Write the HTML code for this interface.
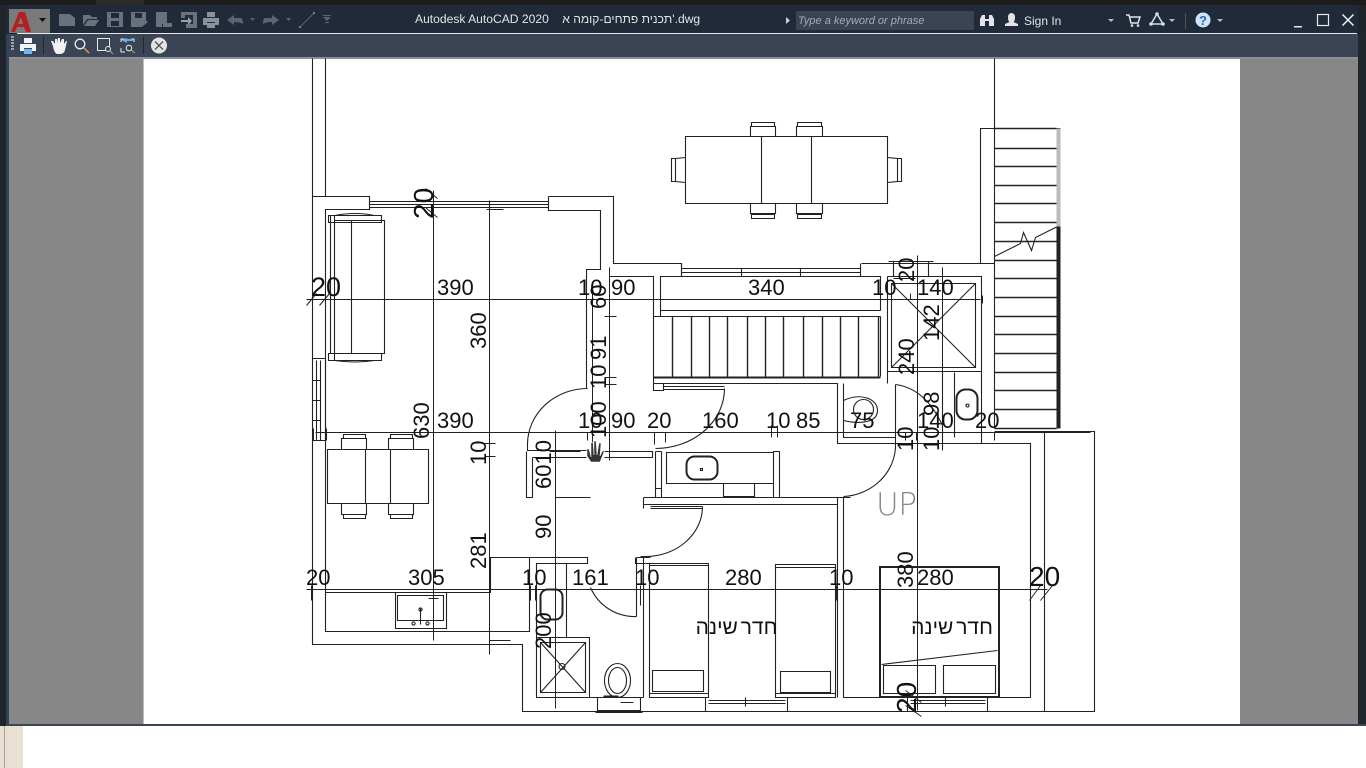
<!DOCTYPE html>
<html><head><meta charset="utf-8"><title>AutoCAD</title>
<style>
html,body{margin:0;padding:0;width:1366px;height:768px;overflow:hidden;background:#fff}
svg{display:block;position:absolute;left:0;top:0}
.d{font:22px "Liberation Sans",sans-serif;fill:#111}
.ui{font-family:"Liberation Sans","Noto Sans CJK JP",sans-serif}
</style></head><body>
<svg width="1366" height="768" viewBox="0 0 1366 768" xmlns="http://www.w3.org/2000/svg">
<rect width="1366" height="768" fill="#fff"/>
<rect x="0" y="0" width="1366" height="726" fill="#20242b"/>
<rect x="0" y="0" width="1366" height="5" fill="#1c1c1c"/>
<rect x="96" y="0" width="48" height="5" fill="#2b2b2b"/>
<rect x="6" y="5" width="1352" height="28" fill="#212a38"/>
<rect x="17" y="33" width="1340" height="1" fill="#e8e8e8"/>
<rect x="6" y="34" width="1352" height="23" fill="#3b4454"/>
<rect x="6" y="57" width="1352" height="2" fill="#8a8f98"/>
<rect x="6" y="34" width="3" height="692" fill="#33415a"/>
<rect x="9" y="59" width="135" height="665" fill="#878787"/>
<rect x="1240" y="59" width="118" height="665" fill="#878787"/>
<rect x="143" y="59" width="1" height="665" fill="#bbb"/>
<rect x="144" y="59" width="1096" height="665" fill="#fff"/>
<rect x="1358" y="34" width="8" height="692" fill="#22262d"/>
<rect x="6" y="724" width="1360" height="2" fill="#3b4454"/>
<rect x="0" y="726" width="23" height="42" fill="#e8e0d3"/>
<rect x="4" y="726" width="1" height="42" fill="#aaa498"/>

<!-- Drawing -->
<g transform="translate(.5,.5)" fill="none" stroke="#222" stroke-width="1.1">
<!-- outer walls -->
<path d="M312 58V644H522V711H1094V431H994M325 58V196M312 196H369V209H325V631H529V557H490V592H325M369 201H548M369 204H548M369 207H548M369 201V209M548 201V209M489 200V209M548 196V210H600V269H586V388M548 196H613V263H681V276H660V316M609 276H653V316"/>
<!-- upper window -->
<path d="M681 263V276M681 268H860M681 272H860M681 276H860M741 268V276M800 268V276M860 263V276M861 263H980V128H1060M994 58V428M980 263H994M860 276H880V310"/>
<!-- stair mid -->
<path d="M660 310H880M653 316H880M653 316V376M880 316V376M887 276V383M653 383H837V443H855M843 383V437H895M653 376V383"/>
<path d="M672 316V377M691 316V377M709 316V377M727 316V377M747 316V377M765 316V377M783 316V377M803 316V377M822 316V377M840 316V377M858 316V377M878 316V377" stroke-width="1.4"/>
<path d="M653 377H880" stroke-width="2"/>
<!-- right stair treads -->
<path d="M994 128H1056M994 148H1056M994 166H1056M994 185H1056M994 203H1056M994 222H1056M994 241H1056M994 260H1056M994 278H1056M994 297H1056M994 316H1056M994 334H1056M994 353H1056M994 372H1056M994 390H1056M994 409H1056M994 428H1056" stroke-width="1.5"/>
<path d="M994 256L1020 243L1023 232L1031 250L1035 237L1057 226"/>
<!-- shower top right -->
<path d="M887 276H981V443M891 283H975V367H891ZM891 283L975 367M975 283L891 367M887 371H981M888 261H933M893 261V276M928 261V276M954 372V437M942 372V447"/>
<path d="M895 384V447M895 384Q925 388 942 425" />
<rect x="956" y="389" width="21" height="30" rx="9" stroke-width="2"/>
<circle cx="967" cy="405" r="1.5"/>
<path d="M843 400C860 392 877 398 877 410C877 422 860 424 843 420"/>
<circle cx="863" cy="409" r="10"/>
<!-- lower right -->
<path d="M845 437H895M842 443H1030V697H843V497H837V504M843 497H850M1044 431V711M895 447A55 52 0 0 1 843 496"/>
<!-- centre left door -->
<path d="M527 443A60 56 0 0 1 587 388M527 443V450H586M527 450H555M532 457H586M526 451V497H532V457M604 451H652V457H604M555 451V457"/>
<path d="M724 388A69 60 0 0 1 655 448M663 386H724M663 389H724M653 383V390H663V383"/>
<!-- bathroom upper -->
<path d="M655 451V497M661 451V497M655 451H661M655 488H661M666 452H773V483H666ZM723 483V496H754V483M773 451V497H779V451ZM643 497H778M779 497H837M643 497V508M643 504H837M837 504V697M650 506H702M650 508H702M702 506A57 50 0 0 1 645 556M640 556H650"/>
<rect x="686" y="456" width="31" height="23" rx="8" stroke-width="2"/>
<rect x="700" y="468" width="2" height="2"/>
<!-- beds -->
<path d="M649 563H708V697H649ZM649 565H708M652 670H703V691H652ZM775 564H835V697H775ZM775 567H835M780 671H830V692H780ZM649 693H708M775 693H835"/>
<rect x="879.500" y="566.500" width="119" height="130" stroke-width="2"/>
<path d="M881 664L997 650M883 665H935V693H883ZM943 665H995V693H943Z"/>
<!-- bedroom windows -->
<path d="M705 697V711H787V697M702 711H788M708 700H785M708 703H785M745 697V706M903 711H990M907 697V711M987 697V711M910 700H985M910 703H985M945 697V706"/>
<!-- wc -->
<path d="M529 557H587V563H536V697H643M566 563V637M536 637H589V697M540 642H585V692H540ZM540 642L585 692M585 642L540 692M636 557V616M643 557V697M636 557H650M590 587A48 48 0 0 0 636 616M635 557V563H650"/>
<rect x="540" y="589" width="22" height="30" rx="7" stroke-width="2"/>
<rect x="558.500" y="663" width="6" height="6" rx="3"/>
<ellipse cx="617" cy="680" rx="13" ry="17"/>
<ellipse cx="617" cy="680" rx="9" ry="13"/>
<path d="M597 697V710H640V697M595 712H642M620 702H633"/>
<path d="M603 696H618" stroke-width="2"/>
<!-- kitchen sink -->
<path d="M395 592H446V628H395ZM397 595H443V620H397ZM420 608V624"/>
<circle cx="420" cy="609" r="1.6"/><circle cx="413" cy="623" r="1.6"/><circle cx="427" cy="623" r="1.6"/>
<!-- living sofa -->
<path d="M334 220H384V353H334M330 215V353M334 215V360M351 220V353M328 215H381V222H328ZM328 353H381V360H328ZM334 215Q355 211 374 215M334 360Q355 363 374 360"/>
<!-- side window -->
<path d="M312 358H325V440M316 360V440M320 360V440M312 380H320M312 400H320M312 420H320M312 440H325"/>
<!-- dining -->
<path d="M327 449H428V503H327ZM365 449V503M390 449V503" stroke-width="1.1"/>
<path d="M341 449V438H366V449M343 434H365V438H343ZM388 449V438H413V449M390 434H412V438H390ZM341 503V514H366V503M343 514H365V518H343ZM388 503V514H413V503M390 514H412V518H390Z"/>
<!-- big table -->
<path d="M685 136H887V203H685ZM761 136V203M811 136V203" stroke-width="1.1"/>
<path d="M750 136V126H775V136M751 122H774V126H751ZM796 136V126H822V136M797 122H821V126H797ZM750 203V213H775V203M751 214H774V218H751ZM796 203V213H822V203M797 214H821V218H797ZM685 157L675 158V181L685 182M671 158H675V181H671ZM887 157L897 158V181L887 182M897 158H901V181H897Z"/>
<!-- dimension lines -->
<g stroke="#222" stroke-width="1">
<path d="M433 190V640M489 205V654M555 430V708M306 299H980M315 432H1090M306 589H1047M592 290V440M609 267V460M917 255V710M942 267V450"/>
<path d="M555 432H605M609 457H645M555 497H590M555 451H580M489 640H510"/>
<!-- ticks -->
<path d="M306 305L316 293M319 305L329 293M312 299V310M325 299V310M425 188L437 198M425 207L437 217M486 209H503M586 299V310M592 296V304M604 316H616M604 377H616M604 384H616M313 428V440M326 428V440M587 432V440M592 432V450M654 432V444M665 432V442M771 425V437M777 425V437M837 430V438M880 283V299M910 293V299M982 295V303M905 432V440M916 432V440M942 432V440M981 432V440M994 432V440M311 585V600M325 585V600M530 585V600M535 585V600M640 585V600M649 585V600M836 585V600M843 585V600M1029 600L1040 585M1040 600L1052 585M1030 589V602M1044 589V602M484 443H495M484 456H495M549 697H561M549 451H561M428 598H438M640 597V605M905 690L921 702M905 705L921 716M893 278H915"/>
</g>
<path d="M1056 128V226" stroke="#bbb" stroke-width="4" transform="translate(2,0)"/>
<path d="M1056 226V428" stroke="#222" stroke-width="4" transform="translate(2,0)"/>
</g>

<!-- dim text -->
<g class="d">
<text x="437" y="295">390</text><text x="578" y="295">10</text><text x="611" y="295">90</text>
<text x="748" y="295">340</text><text x="872" y="295">10</text><text x="917" y="295">140</text>
<text x="437" y="428">390</text><text x="578" y="428">10</text><text x="611" y="428">90</text>
<text x="647" y="428">20</text><text x="702" y="428">160</text><text x="766" y="428">10</text>
<text x="796" y="428">85</text><text x="850" y="428">75</text><text x="917" y="428">140</text><text x="975" y="428">20</text>
<text x="306" y="585">20</text><text x="408" y="585">305</text><text x="522" y="585">10</text>
<text x="572" y="585">161</text><text x="635" y="585">10</text><text x="725" y="585">280</text>
<text x="829" y="585">10</text><text x="917" y="585">280</text>
<text x="311" y="296" style="font-size:27px">20</text>
<text x="1029" y="586" style="font-size:28px">20</text>
<g>
<text transform="translate(433,219) rotate(-90)" style="font-size:28px">20</text>
<text transform="translate(916,713) rotate(-90)" style="font-size:28px">20</text>
<text transform="translate(429,439) rotate(-90)">630</text>
<text transform="translate(486,349) rotate(-90)">360</text>
<text transform="translate(606,309) rotate(-90)">60</text>
<text transform="translate(606,360) rotate(-90)">91</text>
<text transform="translate(606,389) rotate(-90)">10</text>
<text transform="translate(606,438) rotate(-90)">100</text>
<text transform="translate(486,465) rotate(-90)">10</text>
<text transform="translate(486,569) rotate(-90)">281</text>
<text transform="translate(551,489) rotate(-90)">6010</text>
<text transform="translate(551,539) rotate(-90)">90</text>
<text transform="translate(551,649) rotate(-90)">200</text>
<text transform="translate(939,341) rotate(-90)">142</text>
<text transform="translate(914,375) rotate(-90)">240</text>
<text transform="translate(914,282) rotate(-90)">20</text>
<text transform="translate(939,416) rotate(-90)">98</text>
<text transform="translate(913,451) rotate(-90)">10</text>
<text transform="translate(939,451) rotate(-90)">10</text>
<text transform="translate(913,588) rotate(-90)">380</text>
</g>
</g>
<text x="736.500" y="634" text-anchor="middle" direction="rtl" class="ui" font-size="21" style="word-spacing:-3px" fill="#111">חדר שינה</text>
<text x="952" y="634" text-anchor="middle" direction="rtl" class="ui" font-size="21" style="word-spacing:-3px" fill="#111">חדר שינה</text>
<text x="876" y="515" font-family="'DejaVu Sans',sans-serif" font-weight="200" font-size="31" fill="#8a8a8a" textLength="41">UP</text>

<!-- hand cursor -->
<path d="M589 449L591 457V443L593 442L594 455V441H596L597 455L599 443H601L600 456L603 450L604 452L600 462H591L587 456V449Z" fill="#333" stroke="#fff" stroke-width=".5"/>

<!-- Top toolbar -->
<rect x="9" y="9" width="41" height="24" fill="#7a7a7a"/>
<path d="M11 32L19 12H25L31 32H26L24 27H17L15 32Z" fill="#b51f1f"/>
<path d="M18 24H23L21 17Z" fill="#7a7a7a"/>
<path d="M39 18H46L42.500 22Z" fill="#111"/>
<g fill="#69717d">
<path d="M59 14H70L75 18V26H59Z"/>
<path d="M83 15H90L92 17H97V19H87L83 25ZM84 26L88 20H99L95 26Z"/>
<path d="M107 12H123V27H107ZM111 13V18H119V13ZM111 21V26H119V21Z" fill-rule="evenodd"/>
<path d="M131 12H146V20L140 27H131ZM135 13V18H142V13Z" fill-rule="evenodd"/>
<path d="M145 20L148 22L142 27H140Z"/>
<path d="M156 12H167V24H162V27H156Z"/><path d="M163 23H172V27H163Z"/>
<path d="M181 12H197V28H186V24H193V15H185V18H181Z"/><path d="M181 20H188V17L192 21L188 25V22H181Z" fill="#9aa1ab"/>
</g>
<path d="M203 18H219V25H215V22H207V25H203ZM207 12H215V17H207ZM207 23H215V28H207Z" fill="#8b929c"/>
<g fill="#5c6470">
<path d="M227 20L234 15V18H241Q243 18 243 24Q240 22 234 22V25Z"/>
<path d="M279 20L272 15V18H265Q263 18 263 24Q266 22 272 22V25Z"/>
<path d="M250 18H255L252.500 21ZM286 18H291L288.500 21Z"/>
<path d="M323 17H331L327 21ZM323 15H331V16H323ZM325 22H329V23H325Z"/>
</g>
<path d="M300 27L314 13" stroke="#5c6470" stroke-width="1"/>
<circle cx="300" cy="27" r="1" fill="#8b929c"/><circle cx="314" cy="13" r="1" fill="#8b929c"/>
<text x="415" y="23" class="ui" font-size="12.100" fill="#e2e4e8">Autodesk AutoCAD 2020 &#160;&#160; תכנית פתחים-קומה א'.dwg</text>
<path d="M786 17L790 20.500L786 24Z" fill="#ccd"/>
<rect x="796" y="11" width="178" height="19" fill="#3b4454"/>
<text x="798" y="24" class="ui" font-size="11" font-style="italic" fill="#a4abb5">Type a keyword or phrase</text>
<path d="M980 19L982 15H985V19H989V15H992L994 19V26H989V21H985V26H980Z" fill="#e2e4e8"/>
<path d="M1008 17A3.500 4 0 1 1 1015 17Q1015 21 1013.500 22L1018 24V26H1005V24L1009.500 22Q1008 21 1008 17Z" fill="#e2e4e8"/>
<text x="1024" y="25" class="ui" font-size="12" fill="#e2e4e8">Sign In</text>
<path d="M1108 19H1114L1111 22ZM1169 19H1175L1172 22ZM1217 19H1223L1220 22Z" fill="#b5bac2"/>
<path d="M1126 15H1129L1131 23H1138L1140 17H1130" fill="none" stroke="#e2e4e8" stroke-width="1.500"/>
<circle cx="1132" cy="25.500" r="1.300" fill="#e2e4e8"/><circle cx="1138" cy="25.500" r="1.300" fill="#e2e4e8"/>
<path d="M1157 14L1151 24H1163Z" fill="none" stroke="#cfe0f5" stroke-width="1.500"/>
<circle cx="1157" cy="14" r="1.800" fill="#cfe0f5"/><circle cx="1151" cy="24" r="1.800" fill="#cfe0f5"/><circle cx="1163" cy="24" r="1.800" fill="#cfe0f5"/>
<rect x="1185" y="13" width="1" height="16" fill="#4a5362"/>
<circle cx="1203" cy="20" r="7.500" fill="#cfe3fb"/>
<text x="1203" y="25" text-anchor="middle" class="ui" font-size="13" font-weight="bold" fill="#2b67b8">?</text>
<rect x="1294" y="26" width="8" height="1.500" fill="#e8e8e8"/>
<rect x="1317.500" y="14.500" width="11" height="11" fill="none" stroke="#e8e8e8" stroke-width="1.200"/>
<path d="M1342.500 14.500L1353.500 25.500M1353.500 14.500L1342.500 25.500" stroke="#f0f0f0" stroke-width="1.500"/>

<!-- Second toolbar -->
<path d="M11 36h3v2h-3zM11 39h3v2h-3zM11 42h3v2h-3zM11 45h3v2h-3zM11 48h3v2h-3z" fill="#9aa1ab"/>
<path d="M20 44H36V51H32V48H24V51H20ZM24 38H32V43H24Z" fill="#f2f2f2"/>
<rect x="24" y="49" width="8" height="5" fill="#6fb4ea"/>
<rect x="43" y="37" width="1" height="17" fill="#1f2733"/>
<path d="M53 46L51 41H53L55 44V39H57V43L58 38H60V43L62 39H64V44L66 41H67L65 50Q64 54 60 54H57Q54 53 53 46Z" fill="#f2f2f2"/>
<circle cx="80" cy="44" r="4.800" fill="none" stroke="#e8e8e8" stroke-width="1.300"/>
<path d="M84 48L89 53" stroke="#d8a050" stroke-width="1.500"/>
<rect x="97.500" y="38.500" width="12" height="12" fill="none" stroke="#e8e8e8" stroke-width="1"/>
<circle cx="108" cy="49" r="2.500" fill="#3b4454" stroke="#e8e8e8"/>
<path d="M110 51L113 54" stroke="#d8a050"/>
<path d="M121 42V39H125M131 39H134V42M121 48V52H125" fill="none" stroke="#e8e8e8"/>
<path d="M121 40L127 38V39H133V41H127V43Z" fill="#5fb0ee"/>
<circle cx="129" cy="48" r="2.800" fill="none" stroke="#e8e8e8"/>
<path d="M131 50L135 53" stroke="#d8a050"/>
<rect x="143" y="37" width="1" height="17" fill="#1f2733"/>
<circle cx="159" cy="45.500" r="8" fill="#e4e4e4"/>
<path d="M155 41.500L163 49.500M163 41.500L155 49.500" stroke="#555" stroke-width="1.300"/>
</svg>
</body></html>
